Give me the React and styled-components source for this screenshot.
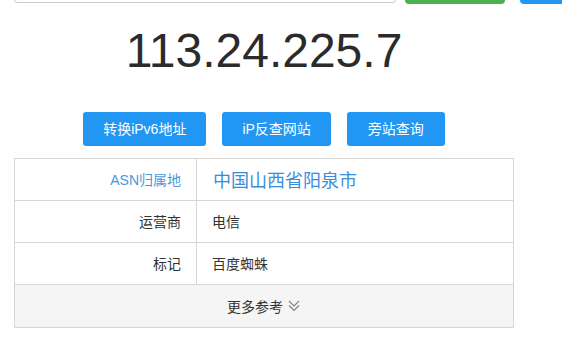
import React from "react";
import styled, { createGlobalStyle } from "styled-components";

const GlobalStyle = createGlobalStyle`
  html, body { margin: 0; padding: 0; background: #fff; }
  body {
    font-family: "Liberation Sans", Arial, "Noto Sans CJK SC", sans-serif;
    color: #333;
    overflow: hidden;
  }
`;

const Page = styled.div`
  padding-left: 14px;
`;

const SearchRow = styled.div`
  display: flex;
  align-items: flex-start;
  height: 35px;
  margin-top: -31px;
  width: 548px;
  overflow: hidden;
  margin-bottom: -1px;
`;

const SearchInput = styled.div`
  flex: none;
  width: 380px;
  height: 32px;
  border: 1px solid #ccc;
  border-radius: 0 0 3px 3px;
  background: #fff;
  margin-right: 9px;
`;

const TopButton = styled.div`
  flex: none;
  width: 100px;
  height: 34.5px;
  border-radius: 4px;
  background: ${(p) => p.$color};
  margin-right: ${(p) => p.$gap || 0}px;
`;

const Content = styled.div`
  width: 500px;
`;

const Title = styled.h1`
  margin: 24px 0 0;
  text-align: center;
  font-family: "Liberation Sans", Arial, sans-serif;
  font-weight: 400;
  font-size: 48px;
  line-height: 48px;
  color: #2b2b2b;
`;

const ButtonRow = styled.div`
  display: flex;
  justify-content: center;
  gap: 16px;
  margin-top: 37px;
`;

const ActionButton = styled.button`
  height: 34px;
  padding: 0 ${(p) => p.$pad || 20}px;
  border: none;
  border-radius: 3px;
  background: #2196f3;
  color: #fff;
  font-family: "Liberation Sans", Arial, "Noto Sans CJK SC", sans-serif;
  font-size: 14px;
  line-height: 34px;
  cursor: pointer;
`;

const InfoTable = styled.div`
  margin-top: 12px;
  border: 1px solid #d6d6d6;
`;

const Row = styled.div`
  display: grid;
  grid-template-columns: 182px 1fr;
  height: 41px;
  border-top: ${(p) => (p.$first ? "none" : "1px solid #d6d6d6")};
`;

const Label = styled.div`
  border-right: 1px solid #d6d6d6;
  display: flex;
  align-items: center;
  justify-content: flex-end;
  padding-right: 15px;
  padding-bottom: 2px;
  font-size: 14px;
  color: ${(p) => (p.$accent ? "#4a98e0" : "#333")};
`;

const Value = styled.div`
  display: flex;
  align-items: center;
  padding-left: ${(p) => (p.$big ? 16 : 15)}px;
  padding-bottom: 2px;
  font-size: ${(p) => (p.$big ? 18 : 14)}px;
  color: ${(p) => (p.$accent ? "#3a8ddb" : "#333")};
`;

const MoreRow = styled.div`
  height: 41px;
  border-top: 1px solid #d6d6d6;
  background: #f5f5f5;
  display: flex;
  align-items: center;
  justify-content: center;
  gap: 4px;
  padding-bottom: 1px;
  font-size: 14px;
  color: #333;
`;

const Chevrons = () => (
  <svg width="14" height="14" viewBox="0 0 14 14" fill="none" stroke="#808080" strokeWidth="1.1">
    <polyline points="2,2 7,7 12,2" />
    <polyline points="2,6.5 7,11.5 12,6.5" />
  </svg>
);

const rows = [
  { label: "ASN归属地", value: "中国山西省阳泉市", accent: true, big: true },
  { label: "运营商", value: "电信" },
  { label: "标记", value: "百度蜘蛛" },
];

export default function App() {
  return (
    <>
      <GlobalStyle />
      <Page>
        <SearchRow>
          <SearchInput />
          <TopButton $color="#4caf50" $gap={15} />
          <TopButton $color="#2196f3" />
        </SearchRow>
        <Content>
          <Title>113.24.225.7</Title>
          <ButtonRow>
            <ActionButton>转换iPv6地址</ActionButton>
            <ActionButton>iP反查网站</ActionButton>
            <ActionButton $pad={21}>旁站查询</ActionButton>
          </ButtonRow>
          <InfoTable>
            {rows.map((r, i) => (
              <Row key={r.label} $first={i === 0}>
                <Label $accent={r.accent}>{r.label}</Label>
                <Value $accent={r.accent} $big={r.big}>{r.value}</Value>
              </Row>
            ))}
            <MoreRow>
              更多参考 <Chevrons />
            </MoreRow>
          </InfoTable>
        </Content>
      </Page>
    </>
  );
}
